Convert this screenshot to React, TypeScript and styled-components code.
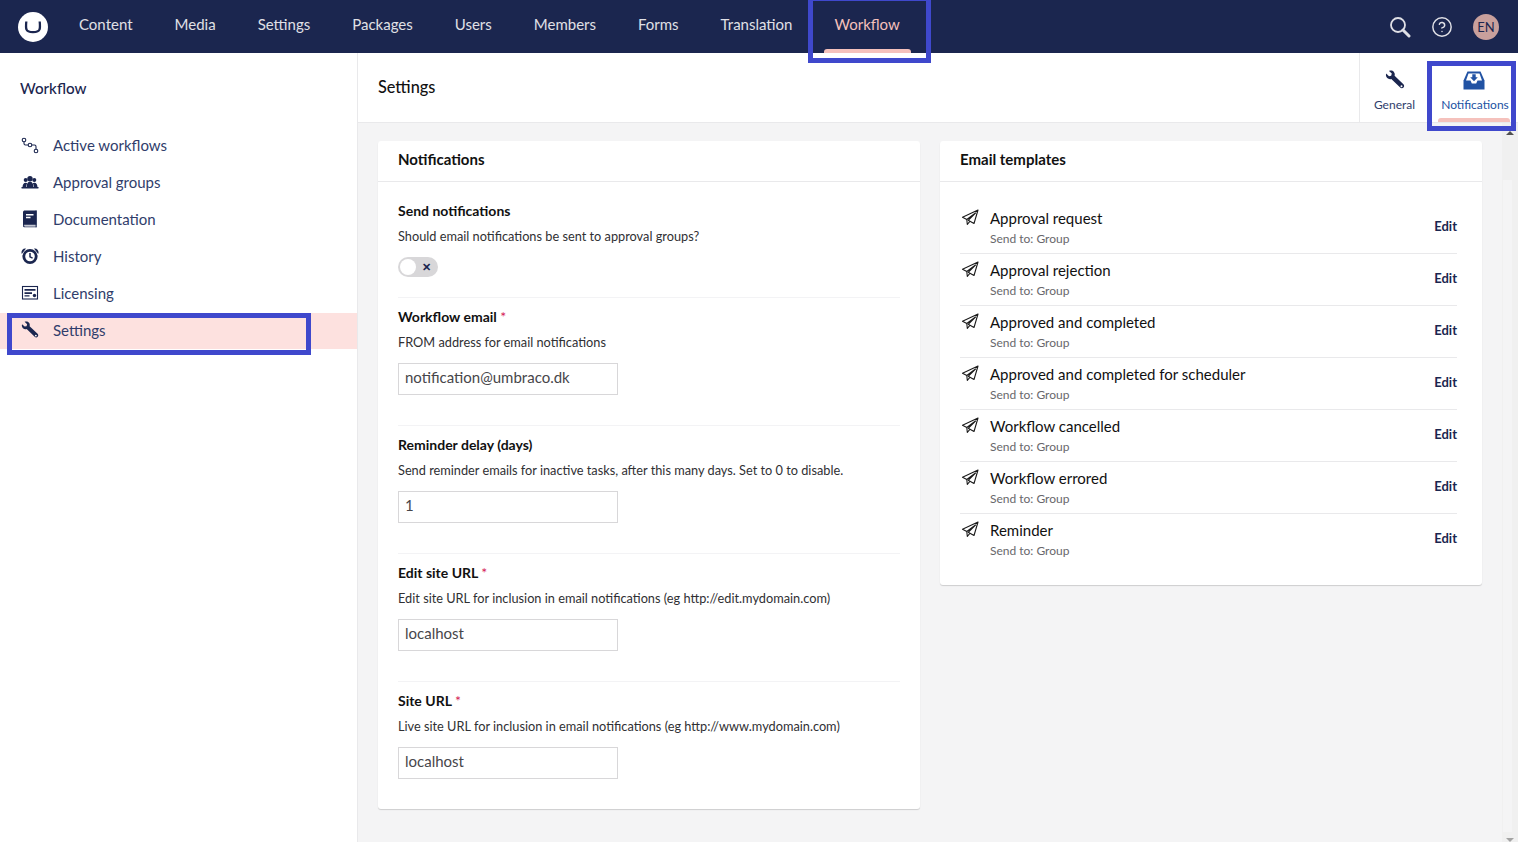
import React from 'react';
import styled, { createGlobalStyle } from 'styled-components';
import { CircleHelp } from 'lucide-react';

const GlobalStyle = createGlobalStyle`
  html, body {
    margin: 0;
    padding: 0;
    height: 100%;
    overflow: hidden;
  }
  body {
    font-family: Lato, "Open Sans", sans-serif;
    font-size: 14px;
    color: #1b264f;
    background: #fff;
  }
  * {
    box-sizing: border-box;
  }
`;

const sections = ['Content', 'Media', 'Settings', 'Packages', 'Users', 'Members', 'Forms', 'Translation'];
const templates = [
  'Approval request',
  'Approval rejection',
  'Approved and completed',
  'Approved and completed for scheduler',
  'Workflow cancelled',
  'Workflow errored',
  'Reminder',
];

const Wrench = ({ size }: { size: number }) => (
  <svg width={size} height={size} viewBox="0 0 20 20" fill="#1b264f">
    <path d="M1.200 3.600 4 6.200l2.200-.5.6-2.200L4 .9C5.800.1 7.800.5 8.900 1.900c.9 1.100 1.100 2.600.7 3.800l8.800 8.600c1 1 1 2.400.1 3.300-.9.9-2.400.9-3.300-.1L6.300 8.900c-1.400.5-3 .2-4.100-.9C1 6.900.6 5.100 1.200 3.600Z" />
    <circle cx="16.500" cy="16.200" r="1" fill="#fff" />
  </svg>
);

const SearchIcon = () => (
  <svg width="22" height="22" viewBox="0 0 22 22" fill="none" stroke="#e0e0e6">
    <circle cx="9" cy="9" r="7" strokeWidth="1.800" />
    <path d="M14 14l6 6" strokeWidth="3" strokeLinecap="round" />
  </svg>
);

const FlowIcon = () => (
  <svg width="18" height="18" viewBox="0 0 18 18" fill="none" stroke="#1b264f" strokeWidth="1.100">
    <circle cx="3" cy="4" r="1.800" />
    <circle cx="9" cy="9" r="1.800" />
    <circle cx="15" cy="15" r="1.800" />
    <path d="M3 5.800V7.500c0 1 .5 1.500 1.500 1.500h2.700M10.800 9H13.500c1 0 1.500.5 1.500 1.500v2.700" />
  </svg>
);

const GroupIcon = () => (
  <svg width="18" height="18" viewBox="0 0 18 18" fill="#1b264f">
    <circle cx="9" cy="5.800" r="2.700" />
    <circle cx="4.700" cy="7" r="2" />
    <circle cx="13.300" cy="7" r="2" />
    <path d="M5.500 14.500c0-3.800 1.300-5.800 3.500-5.800s3.500 2 3.500 5.800Z" />
    <path d="M1.500 14.500c0-3 1.200-4.700 3.200-4.700.7 0 1.200.2 1.600.6-.9 1-1.300 2.300-1.300 4.100ZM16.500 14.500c0-3-1.200-4.700-3.200-4.700-.7 0-1.200.2-1.600.6.9 1 1.300 2.300 1.300 4.100Z" />
    <rect x=".3" y="14" width="17.400" height="1.500" rx=".7" />
  </svg>
);

const BookIcon = () => (
  <svg width="18" height="18" viewBox="0 0 18 18">
    <path d="M2 2.200C2 1.100 2.800.6 3.800.6H15.500V14.800H4.200C3 14.800 2 15.200 2 16Z" fill="#1b264f" />
    <path d="M2 15.800c0 1 .8 1.500 1.800 1.500H15.500v-.9H4.200c-.8 0-1.300-.2-1.300-.6s.5-.6 1.300-.6H15.500v-.4H4C2.800 14.800 2 15 2 15.800Z" fill="#1b264f" />
    <path d="M5 4h7.500v1.400H5ZM5 6.800h4.500v1.400H5Z" fill="#fff" />
    <path d="M14.600.6h1.100V17.300h-1.100Z" fill="#1b264f" />
  </svg>
);

const ClockIcon = () => (
  <svg width="18" height="18" viewBox="0 0 18 18">
    <path d="M.8 7C-.4 4 1.800.8 5 1.500ZM17.200 7c1.200-3-1-6.200-4.200-5.500Z" fill="#1b264f" />
    <circle cx="9" cy="9.500" r="6.200" fill="#fff" stroke="#1b264f" strokeWidth="2.800" />
    <path d="M9 6v3.800l2.600 1.400" fill="none" stroke="#1b264f" strokeWidth="1.500" />
  </svg>
);

const LicenseIcon = () => (
  <svg width="18" height="18" viewBox="0 0 18 18">
    <rect x="1.500" y="2.500" width="15" height="12.500" fill="none" stroke="#1b264f" strokeWidth="1.100" />
    <path d="M3.500 5h11v1.800h-11ZM3.500 8.200h7.500v1.800H3.500ZM3.500 11.300h5v1.200h-5Z" fill="#1b264f" />
    <circle cx="13.500" cy="11.500" r="1.700" fill="#1b264f" />
  </svg>
);

const InboxIcon = () => (
  <svg width="22" height="19" viewBox="0 0 22 19">
    <path d="M4.500.5h13L21.500 9.500V18.500H.5V9.500Z" fill="#2152a3" />
    <path d="M5.500 2.500h11l2.500 7h-4.500L13.200 12.500H8.800L7.500 9.500H3Z" fill="#fff" />
    <path d="M9.300 3.200h3.400v3h2.100L11 10.200 7.200 6.200h2.100Z" fill="#2152a3" />
  </svg>
);

const PlaneIcon = () => (
  <svg width="18" height="18" viewBox="0 0 18 18" fill="none" stroke="#1b1b1b" strokeWidth="1.100" strokeLinejoin="round">
    <path d="M17 1 1.500 8.300l4.300 2.200L14.500 4 7.200 11.300l5.800 3.200Z" />
    <path d="M5.800 10.500 6.300 15.500 8.800 12.300" />
  </svg>
);

const sideItems = [
  { label: 'Active workflows', icon: <FlowIcon /> },
  { label: 'Approval groups', icon: <GroupIcon /> },
  { label: 'Documentation', icon: <BookIcon /> },
  { label: 'History', icon: <ClockIcon /> },
  { label: 'Licensing', icon: <LicenseIcon /> },
  { label: 'Settings', icon: <Wrench size={18} />, active: true },
];

export default function App() {
  return (
    <Page>
      <GlobalStyle />
      <TopBar>
        <Logo>
          <svg width="30" height="30" viewBox="0 0 30 30">
            <circle cx="15" cy="15" r="15" fill="#fff" />
            <path d="M8.300 9.500c-.4 4-.4 6.500.2 8 .6 1.800 2.800 2.600 6.500 2.600s5.900-.8 6.500-2.600c.6-1.500.6-4 .2-8" fill="none" stroke="#1b264f" strokeWidth="2.300" />
          </svg>
        </Logo>
        <Sections>
          {sections.map((s) => (
            <Section key={s}>{s}</Section>
          ))}
          <Section $active>Workflow</Section>
        </Sections>
        <Tools>
          <SearchIcon />
          <CircleHelp size={22} color="#e0e0e6" strokeWidth={1.600} />
          <Avatar>EN</Avatar>
        </Tools>
      </TopBar>
      <Body>
        <Sidebar>
          <TreeTitle>Workflow</TreeTitle>
          <Tree>
            {sideItems.map((item) => (
              <TreeItem key={item.label} $active={item.active}>
                <TreeIcon>{item.icon}</TreeIcon>
                {item.label}
              </TreeItem>
            ))}
          </Tree>
        </Sidebar>
        <Main>
          <EditorHeader>
            <EditorTitle>Settings</EditorTitle>
            <Tab>
              <Wrench size={20} />
              <TabLabel>General</TabLabel>
            </Tab>
            <Tab $active>
              <InboxIcon />
              <TabLabel $active>Notifications</TabLabel>
            </Tab>
          </EditorHeader>
          <Content>
            <Column>
              <Panel>
                <PanelHead>Notifications</PanelHead>
                <FormBody>
                  <Field>
                    <FieldLabel>Send notifications</FieldLabel>
                    <FieldHelp>Should email notifications be sent to approval groups?</FieldHelp>
                    <Toggle>
                      <Knob />
                      <Cross>✕</Cross>
                    </Toggle>
                  </Field>
                  <Field>
                    <FieldLabel>Workflow email <Req>*</Req></FieldLabel>
                    <FieldHelp>FROM address for email notifications</FieldHelp>
                    <TextInput defaultValue="notification@umbraco.dk" />
                  </Field>
                  <Field>
                    <FieldLabel>Reminder delay (days)</FieldLabel>
                    <FieldHelp>Send reminder emails for inactive tasks, after this many days. Set to 0 to disable.</FieldHelp>
                    <TextInput defaultValue="1" />
                  </Field>
                  <Field>
                    <FieldLabel>Edit site URL <Req>*</Req></FieldLabel>
                    <FieldHelp>Edit site URL for inclusion in email notifications (eg http://edit.mydomain.com)</FieldHelp>
                    <TextInput defaultValue="localhost" />
                  </Field>
                  <Field>
                    <FieldLabel>Site URL <Req>*</Req></FieldLabel>
                    <FieldHelp>Live site URL for inclusion in email notifications (eg http://www.mydomain.com)</FieldHelp>
                    <TextInput defaultValue="localhost" />
                  </Field>
                </FormBody>
              </Panel>
            </Column>
            <Column>
              <Panel>
                <PanelHead>Email templates</PanelHead>
                <TemplateList>
                  {templates.map((t) => (
                    <TemplateRow key={t}>
                      <PlaneSlot><PlaneIcon /></PlaneSlot>
                      <TemplateText>
                        <TemplateName>{t}</TemplateName>
                        <TemplateSub>Send to: Group</TemplateSub>
                      </TemplateText>
                      <EditLink>Edit</EditLink>
                    </TemplateRow>
                  ))}
                </TemplateList>
              </Panel>
            </Column>
            <ScrollTrack>
              <ArrowUp />
              <ScrollThumb />
              <ArrowDown />
            </ScrollTrack>
          </Content>
        </Main>
      </Body>
      <Highlight $x={808} $y={-4} $w={123} $h={67} />
      <Highlight $x={7} $y={313} $w={304} $h={42} />
      <Highlight $x={1427} $y={61} $w={89} $h={70} />
    </Page>
  );
}

const Page = styled.div`
  position: relative;
  width: 100vw;
  height: 100vh;
  display: flex;
  flex-direction: column;
  overflow: hidden;
`;

const TopBar = styled.header`
  height: 53px;
  flex: none;
  display: flex;
  align-items: stretch;
  background: #1b264f;
`;

const Logo = styled.div`
  width: 79px;
  padding-left: 18px;
  display: flex;
  align-items: center;
`;

const Sections = styled.nav`
  display: flex;
  gap: 42px;
`;

const Section = styled.div<{ $active?: boolean }>`
  position: relative;
  display: flex;
  align-items: center;
  padding-bottom: 6px;
  font-size: 15px;
  color: ${(p) => (p.$active ? '#f5c1bc' : '#e0e0e6')};
  ${(p) =>
    p.$active &&
    `
    &::after {
      content: '';
      position: absolute;
      left: -11px;
      right: -11px;
      bottom: 0;
      height: 4px;
      border-radius: 3px 3px 0 0;
      background: #f5c1bc;
    }
  `}
`;

const Tools = styled.div`
  margin-left: auto;
  padding-right: 19px;
  display: flex;
  align-items: center;
  gap: 20px;
`;

const Avatar = styled.div`
  width: 26px;
  height: 26px;
  border-radius: 50%;
  background: #c9a09c;
  color: #1b264f;
  font-size: 13px;
  display: flex;
  align-items: center;
  justify-content: center;
`;

const Body = styled.div`
  flex: 1;
  min-height: 0;
  display: flex;
`;

const Sidebar = styled.aside`
  width: 358px;
  flex: none;
  border-right: 1px solid #e9e9eb;
  background: #fff;
`;

const TreeTitle = styled.div`
  padding: 26px 20px 0;
  height: 74px;
  font-size: 15.2px;
  font-weight: 500;
  line-height: 18px;
  color: #1b264f;
`;

const Tree = styled.div`
  display: flex;
  flex-direction: column;
`;

const TreeItem = styled.div<{ $active?: boolean }>`
  height: ${(p) => (p.$active ? '36px' : '37px')};
  margin-top: ${(p) => (p.$active ? '1px' : '0')};
  display: flex;
  align-items: center;
  padding: 0 0 2px 21px;
  font-size: 15px;
  color: #303d6b;
  background: ${(p) => (p.$active ? '#fde1df' : 'transparent')};
`;

const TreeIcon = styled.span`
  width: 32px;
  display: flex;
  align-items: center;
`;

const Main = styled.main`
  flex: 1;
  min-width: 0;
  display: flex;
  flex-direction: column;
  background: #f4f4f5;
`;

const EditorHeader = styled.div`
  height: 70px;
  flex: none;
  display: flex;
  align-items: stretch;
  background: #fff;
  border-bottom: 1px solid #e9e9eb;
`;

const EditorTitle = styled.div`
  flex: 1;
  padding: 25px 20px 0;
  font-size: 16.3px;
  font-weight: 500;
  line-height: 18px;
  color: #111;
`;

const Tab = styled.div<{ $active?: boolean }>`
  position: relative;
  width: ${(p) => (p.$active ? '89px' : '70px')};
  display: flex;
  flex-direction: column;
  align-items: center;
  padding-top: 17px;
  gap: 7px;
  border-left: ${(p) => (p.$active ? 'none' : '1px solid #e9e9eb')};
  ${(p) =>
    p.$active &&
    `
    padding-top: 18px;
    padding-left: 1px;
    gap: 7px;
    &::after {
      content: '';
      position: absolute;
      left: 9px;
      right: 8px;
      bottom: 0;
      height: 4px;
      border-radius: 3px 3px 0 0;
      background: #f5c1bc;
    }
  `}
`;

const TabLabel = styled.span<{ $active?: boolean }>`
  position: relative;
  left: ${(p) => (p.$active ? '1px' : '0')};
  font-size: 12px;
  line-height: 15px;
  color: ${(p) => (p.$active ? '#2152a3' : '#303d6b')};
`;

const Content = styled.div`
  position: relative;
  flex: 1;
  min-height: 0;
  display: grid;
  grid-template-columns: 542px 542px;
  gap: 20px;
  align-items: start;
  padding: 18px 0 0 20px;
`;

const Column = styled.div`
  display: flex;
  flex-direction: column;
`;

const Panel = styled.section`
  background: #fff;
  border-radius: 3px;
  box-shadow: 0 1px 1px rgba(0, 0, 0, 0.16);
`;

const PanelHead = styled.div`
  height: 41px;
  padding: 9px 20px 0;
  font-size: 15px;
  font-weight: 700;
  line-height: 18px;
  color: #111;
  border-bottom: 1px solid #e9e9eb;
`;

const FormBody = styled.div`
  padding: 19px 20px 29px;
  display: flex;
  flex-direction: column;
`;

const Field = styled.div`
  height: 128px;
  padding-top: 9px;
  display: flex;
  flex-direction: column;
  border-bottom: 1px solid #f3f3f5;
  &:first-child {
    height: 97px;
    padding-top: 0;
  }
  &:last-child {
    border-bottom: none;
    height: 98px;
  }
`;

const FieldLabel = styled.div`
  font-size: 14px;
  font-weight: 700;
  line-height: 20px;
  color: #111;
`;

const Req = styled.span`
  color: #d42054;
  font-weight: 400;
`;

const FieldHelp = styled.div`
  margin-top: 5px;
  font-size: 12.75px;
  line-height: 20px;
  color: #303033;
`;

const Toggle = styled.div`
  position: relative;
  margin-top: 11px;
  width: 40px;
  height: 20px;
  border-radius: 10px;
  background: #d8d7d9;
`;

const Knob = styled.span`
  position: absolute;
  left: 2px;
  top: 2px;
  width: 16px;
  height: 16px;
  border-radius: 50%;
  background: #fff;
`;

const Cross = styled.span`
  position: absolute;
  right: 7px;
  top: 2px;
  font-size: 11px;
  font-weight: 700;
  line-height: 16px;
  color: #1b264f;
`;

const TextInput = styled.input`
  margin-top: 11px;
  width: 220px;
  height: 32px;
  padding: 0 6px 5px;
  border: 1px solid #d8d7d9;
  border-radius: 0;
  outline: none;
  font-family: Lato, sans-serif;
  font-size: 15px;
  color: #47464a;
  background: #fff;
`;

const TemplateList = styled.div`
  padding: 20px 25px 20px 20px;
  display: flex;
  flex-direction: column;
`;

const TemplateRow = styled.div`
  height: 52px;
  padding-bottom: 3px;
  display: flex;
  align-items: center;
  border-bottom: 1px solid #e9e9eb;
  &:last-child {
    border-bottom: none;
    height: 51px;
  }
`;

const PlaneSlot = styled.span`
  width: 30px;
  align-self: flex-start;
  padding: 7px 0 0 1px;
  display: flex;
`;

const TemplateText = styled.div`
  flex: 1;
  display: flex;
  flex-direction: column;
  align-self: flex-start;
  padding-top: 6px;
`;

const TemplateName = styled.div`
  font-size: 15px;
  line-height: 20px;
  color: #111;
`;

const TemplateSub = styled.div`
  margin-top: 2px;
  font-size: 12px;
  line-height: 18px;
  color: #68676b;
`;

const EditLink = styled.span`
  font-size: 13px;
  font-weight: 700;
  color: #1b264f;
`;

const ScrollTrack = styled.div`
  position: absolute;
  top: 0;
  right: 0;
  bottom: 0;
  width: 16px;
  background: #f0f0f0;
`;

const ScrollThumb = styled.span`
  position: absolute;
  top: 57px;
  bottom: 10px;
  left: 1px;
  width: 9px;
  background: #f4f4f5;
`;

const ArrowUp = styled.span`
  position: absolute;
  top: 8px;
  left: 4px;
  border-left: 4px solid transparent;
  border-right: 4px solid transparent;
  border-bottom: 4px solid #505050;
`;

const ArrowDown = styled.span`
  position: absolute;
  bottom: 0;
  left: 4px;
  border-left: 4px solid transparent;
  border-right: 4px solid transparent;
  border-top: 4px solid #a3a3a3;
`;

const Highlight = styled.div<{ $x: number; $y: number; $w: number; $h: number }>`
  position: absolute;
  left: ${(p) => p.$x}px;
  top: ${(p) => p.$y}px;
  width: ${(p) => p.$w}px;
  height: ${(p) => p.$h}px;
  border: 5px solid #3f48cc;
  pointer-events: none;
`;
